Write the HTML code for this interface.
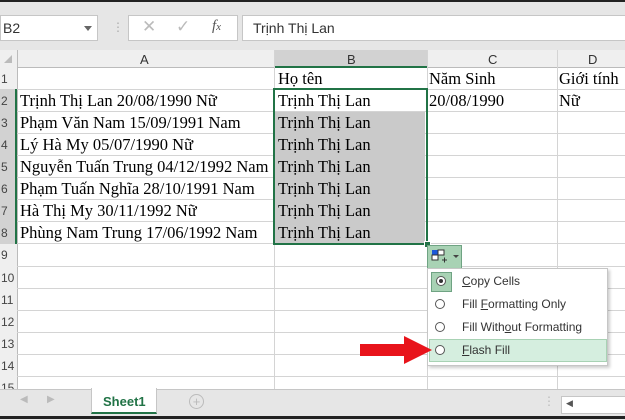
<!DOCTYPE html><html><head><meta charset="utf-8"><style>
body{margin:0;width:625px;height:419px;overflow:hidden;background:#fff;position:relative;font-family:"Liberation Sans",sans-serif}
.a{position:absolute}
.cell{position:absolute;font-family:"Liberation Serif",serif;font-size:16.5px;color:#000;white-space:nowrap;line-height:22px}
.hl{position:absolute;background:#cacaca}
.rn{position:absolute;left:0;width:17px;font-size:12px;color:#444;text-align:left;padding-left:1px;line-height:22px}
.mi{position:absolute;left:462px;font-size:12px;color:#333}
.rad{position:absolute;left:435px;width:8px;height:8px;border:1px solid #555;border-radius:50%;background:#fff}
</style></head><body>
<div class="a" style="left:0;top:0;width:625px;height:50px;background:#e6e6e6"></div>
<div class="a" style="left:0;top:0;width:625px;height:2px;background:#222"></div>
<div class="a" style="left:0;top:15px;width:96px;height:24px;background:#fff;border:1px solid #c6c6c6"></div>
<div class="a" style="left:3px;top:20px;font-size:14px;color:#333">B2</div>
<div class="a" style="left:84px;top:26px;border:4px solid transparent;border-top:5px solid #666"></div>
<div class="a" style="left:112px;top:20px;color:#aaa;font-size:12px">⋮</div>
<div class="a" style="left:128px;top:15px;width:108px;height:24px;background:#fff;border:1px solid #c6c6c6"></div>
<div class="a" style="left:142px;top:17px;color:#bbb;font-size:17px">✕</div>
<div class="a" style="left:176px;top:17px;color:#bbb;font-size:17px">✓</div>
<div class="a" style="left:212px;top:18px;color:#555;font-size:15px;font-style:italic;font-family:'Liberation Serif',serif">f<span style="font-size:11px">x</span></div>
<div class="a" style="left:242px;top:15px;width:390px;height:24px;background:#fff;border:1px solid #c6c6c6"></div>
<div class="a" style="left:253px;top:20px;font-size:14px;color:#333">Trịnh Thị Lan</div>
<div class="a" style="left:0;top:50px;width:625px;height:17px;background:#efefef;border-bottom:1px solid #bbb"></div>
<div class="a" style="left:274px;top:50px;width:153px;height:16px;background:#d2d2d2;border-bottom:2px solid #217346"></div>
<div class="a" style="left:4px;top:55px;border-left:8px solid transparent;border-bottom:8px solid #bbb"></div>
<div class="a" style="left:17px;top:50px;width:1px;height:369px;background:#bbb"></div>
<div class="a" style="left:274px;top:50px;width:1px;height:339px;background:#d4d4d4"></div>
<div class="a" style="left:427px;top:50px;width:1px;height:339px;background:#d4d4d4"></div>
<div class="a" style="left:557px;top:50px;width:1px;height:339px;background:#d4d4d4"></div>
<div class="a" style="left:140px;top:52px;font-size:13px;color:#333">A</div>
<div class="a" style="left:347px;top:52px;font-size:13px;color:#333">B</div>
<div class="a" style="left:488px;top:52px;font-size:13px;color:#333">C</div>
<div class="a" style="left:588px;top:52px;font-size:13px;color:#333">D</div>
<div class="a" style="left:0;top:67px;width:17px;height:322px;background:#efefef"></div>
<div class="a" style="left:0;top:89px;width:15px;height:155px;background:#d2d2d2;border-right:2px solid #217346"></div>
<div class="a" style="left:17px;top:89px;width:608px;height:1px;background:#d4d4d4"></div>
<div class="a" style="left:17px;top:111px;width:608px;height:1px;background:#d4d4d4"></div>
<div class="a" style="left:17px;top:133px;width:608px;height:1px;background:#d4d4d4"></div>
<div class="a" style="left:17px;top:155px;width:608px;height:1px;background:#d4d4d4"></div>
<div class="a" style="left:17px;top:177px;width:608px;height:1px;background:#d4d4d4"></div>
<div class="a" style="left:17px;top:199px;width:608px;height:1px;background:#d4d4d4"></div>
<div class="a" style="left:17px;top:221px;width:608px;height:1px;background:#d4d4d4"></div>
<div class="a" style="left:17px;top:243px;width:608px;height:1px;background:#d4d4d4"></div>
<div class="a" style="left:17px;top:266px;width:608px;height:1px;background:#d4d4d4"></div>
<div class="a" style="left:17px;top:288px;width:608px;height:1px;background:#d4d4d4"></div>
<div class="a" style="left:17px;top:310px;width:608px;height:1px;background:#d4d4d4"></div>
<div class="a" style="left:17px;top:332px;width:608px;height:1px;background:#d4d4d4"></div>
<div class="a" style="left:17px;top:354px;width:608px;height:1px;background:#d4d4d4"></div>
<div class="a" style="left:17px;top:376px;width:608px;height:1px;background:#d4d4d4"></div>
<div class="rn" style="top:68px">1</div><div class="rn" style="top:90px">2</div><div class="rn" style="top:112px">3</div><div class="rn" style="top:134px">4</div><div class="rn" style="top:156px">5</div><div class="rn" style="top:178px">6</div><div class="rn" style="top:200px">7</div><div class="rn" style="top:222px">8</div><div class="rn" style="top:244px">9</div><div class="rn" style="top:267px">10</div><div class="rn" style="top:289px">11</div><div class="rn" style="top:311px">12</div><div class="rn" style="top:333px">13</div><div class="rn" style="top:355px">14</div><div class="rn" style="top:377px">15</div>
<div class="hl" style="left:275px;top:112px;width:150px;height:131px"></div>
<div class="a" style="left:273px;top:88px;width:151px;height:153px;border:2px solid #217346"></div>
<div class="a" style="left:424px;top:241px;width:5px;height:5px;background:#217346;border:1px solid #fff"></div>
<div class="cell" style="left:278px;top:68px">Họ tên</div>
<div class="cell" style="left:429px;top:68px">Năm Sinh</div>
<div class="cell" style="left:559px;top:68px">Giới tính</div>
<div class="cell" style="left:20px;top:90px">Trịnh Thị Lan 20/08/1990 Nữ</div>
<div class="cell" style="left:20px;top:112px">Phạm Văn Nam 15/09/1991 Nam</div>
<div class="cell" style="left:20px;top:134px">Lý Hà My 05/07/1990 Nữ</div>
<div class="cell" style="left:20px;top:156px">Nguyễn Tuấn Trung 04/12/1992 Nam</div>
<div class="cell" style="left:20px;top:178px">Phạm Tuấn Nghĩa 28/10/1991 Nam</div>
<div class="cell" style="left:20px;top:200px">Hà Thị My 30/11/1992 Nữ</div>
<div class="cell" style="left:20px;top:222px">Phùng Nam Trung 17/06/1992 Nam</div>
<div class="cell" style="left:278px;top:90px">Trịnh Thị Lan</div>
<div class="cell" style="left:278px;top:112px">Trịnh Thị Lan</div>
<div class="cell" style="left:278px;top:134px">Trịnh Thị Lan</div>
<div class="cell" style="left:278px;top:156px">Trịnh Thị Lan</div>
<div class="cell" style="left:278px;top:178px">Trịnh Thị Lan</div>
<div class="cell" style="left:278px;top:200px">Trịnh Thị Lan</div>
<div class="cell" style="left:278px;top:222px">Trịnh Thị Lan</div>
<div class="cell" style="left:429px;top:90px">20/08/1990</div>
<div class="cell" style="left:559px;top:90px">Nữ</div>
<div class="a" style="left:427px;top:245px;width:33px;height:22px;background:#a8d2b4;border:1px solid #6fa383"></div>
<svg class="a" style="left:430px;top:248px" width="30" height="16"><rect x="2" y="2" width="6" height="5" fill="#1b58d8"/><rect x="8" y="2" width="6" height="5" fill="#fff" stroke="#333" stroke-width="1"/><rect x="2" y="7" width="6" height="5" fill="#fff" stroke="#333"/><path d="M12 12h5M14.5 9.5v5" stroke="#333"/><path d="M23 7l3 3 3-3z" fill="#444"/></svg>
<div class="a" style="left:427px;top:268px;width:179px;height:96px;background:#fff;border:1px solid #c6c6c6;box-shadow:2px 2px 3px rgba(0,0,0,.2)"></div>
<div class="a" style="left:431px;top:272px;width:19px;height:18px;background:#a8d2b4;border:1px solid #6fa383"></div>
<div class="a" style="left:429px;top:339px;width:176px;height:21px;background:#d5eedf;border:1px solid #a8d2b4"></div>
<div class="rad" style="top:276px;left:436px"></div><div class="a" style="left:439px;top:279px;width:4px;height:4px;border-radius:50%;background:#333"></div>
<div class="rad" style="top:299px"></div>
<div class="rad" style="top:322px"></div>
<div class="rad" style="top:345px"></div>
<div class="mi" style="top:274px"><u>C</u>opy Cells</div>
<div class="mi" style="top:297px">Fill <u>F</u>ormatting Only</div>
<div class="mi" style="top:320px">Fill With<u>o</u>ut Formatting</div>
<div class="mi" style="top:343px"><u>F</u>lash Fill</div>
<svg class="a" style="left:358px;top:334px" width="76" height="32"><path d="M2 10h44V2l28 14-28 14v-8H2z" fill="#e8141b"/></svg>
<div class="a" style="left:0;top:389px;width:625px;height:30px;background:#e6e6e6;border-top:1px solid #c6c6c6"></div>
<div class="a" style="left:20px;top:394px;color:#bbb;font-size:10px">◀</div>
<div class="a" style="left:47px;top:394px;color:#bbb;font-size:10px">▶</div>
<div class="a" style="left:91px;top:388px;width:64px;height:24px;background:#fff;border-left:1px solid #c6c6c6;border-right:1px solid #c6c6c6;border-bottom:2px solid #217346"></div>
<div class="a" style="left:103px;top:394px;font-weight:bold;font-size:13px;color:#217346">Sheet1</div>
<div class="a" style="left:189px;top:394px;width:13px;height:13px;border:1px solid #bbb;border-radius:50%;color:#bbb;font-size:13px;line-height:13px;text-align:center">+</div>
<div class="a" style="left:543px;top:394px;color:#bbb;font-size:12px">⋮</div>
<div class="a" style="left:561px;top:396px;width:64px;height:16px;background:#fff;border:1px solid #c6c6c6"></div>
<div class="a" style="left:566px;top:398px;color:#555;font-size:9px">◀</div>
<div class="a" style="left:0;top:416px;width:625px;height:3px;background:#222"></div>
</body></html>
